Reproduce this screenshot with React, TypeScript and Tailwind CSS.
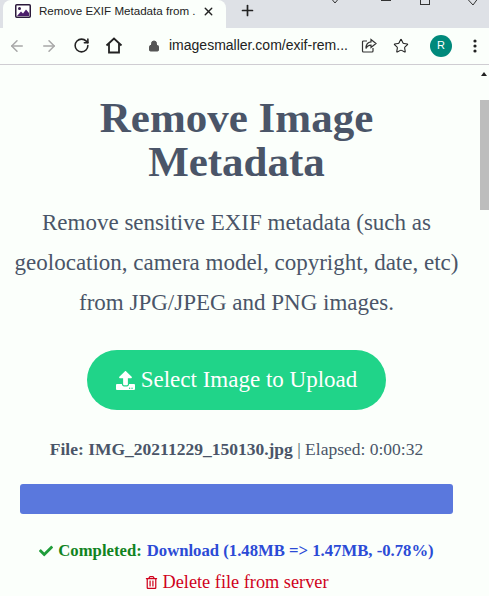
import { ArrowLeft, ArrowRight, RotateCw, Lock, Star, X, Plus } from "lucide-react";
import { FaUpload, FaCheck, FaRegTrashAlt } from "react-icons/fa";

const serif = "font-['Liberation_Serif',serif]";

const Favicon = () => (
  <svg width="16" height="14" viewBox="0 0 16 14">
    <rect x="0.75" y="0.75" width="14.5" height="12.5" rx="1" fill="#fff" stroke="#2a1a3a" strokeWidth="1.5" />
    <circle cx="4.5" cy="4.5" r="1.5" fill="#3a2050" />
    <path d="M2 12 L6 7.5 L8 9.5 L11 5.5 L14 9 V12 Z" fill="#4a1d6a" />
  </svg>
);

const ShareIcon = () => (
  <svg width="16" height="16" viewBox="0 0 16 16" fill="none" stroke="#333" strokeWidth="1.2">
    <path d="M6 3 H2.5 A1 1 0 0 0 1.5 4 V13 A1 1 0 0 0 2.5 14 H11 A1 1 0 0 0 12 13 V10" />
    <path d="M10 1.5 L15 5.5 L10 9.5 V7.2 C7.5 7.2 6 8.2 5 10.5 C5 6.5 7 4.2 10 3.9 Z" />
  </svg>
);

const HomeIcon = () => (
  <svg width="18" height="17" viewBox="0 0 18 17" fill="none" stroke="#222" strokeWidth="1.8">
    <path d="M1.5 8.5 L9 1.5 L16.5 8.5" />
    <path d="M4 6.5 V15.5 H14 V6.5" />
  </svg>
);

const WindowControls = () => (
  <div className="ml-auto flex items-start">
    <svg width="6" height="4" viewBox="0 0 6 4" fill="none" stroke="#333" className="mr-[43px]">
      <path d="M0.5 0 L3 3 L5.5 0" />
    </svg>
    <div className="mr-[29px] h-px w-[10px] bg-[#333]" />
    <div className="mr-[37px] h-[5px] w-[10px] border border-t-0 border-[#333]" />
    <svg width="11" height="6" viewBox="0 0 11 6" fill="none" stroke="#333" className="mr-[11px]">
      <path d="M0.5 -1 L6 5 L10.5 -1" />
    </svg>
  </div>
);

export default function App() {
  return (
    <div className="relative h-[596px] w-[489px] overflow-hidden bg-[#fbfffb]">
      {/* tab strip */}
      <div className="flex h-[28px] bg-[#dee1e6]">
        <div className="ml-[3px] flex h-[28px] w-[223px] items-center rounded-t-lg bg-[#fbfffb] pb-[6px] pl-[12px] font-['Liberation_Sans',sans-serif] text-[11.6px] text-[#222]">
          <Favicon />
          <span className="ml-[8px] w-[156px] whitespace-nowrap">Remove EXIF Metadata from .</span>
          <X size={13} strokeWidth={2.5} className="ml-[7px] text-[#222]" />
        </div>
        <Plus size={17} strokeWidth={2.4} className="ml-[13px] mt-[2px] text-[#222]" />
        <WindowControls />
      </div>
      {/* toolbar */}
      <div className="flex h-[37px] items-center border-b border-[#cfcdd2] bg-[#fbfffb] pb-[1px]">
        <ArrowLeft size={18} strokeWidth={2} className="ml-[8px] text-[#a8a8a8]" />
        <ArrowRight size={18} strokeWidth={2} className="ml-[14px] text-[#a8a8a8]" />
        <RotateCw size={17} strokeWidth={2.2} className="ml-[15px] text-[#222]" />
        <span className="ml-[15px]"><HomeIcon /></span>
        <Lock size={12} fill="#555" strokeWidth={2} className="ml-[25px] text-[#555]" />
        <span className="ml-[9px] font-['Liberation_Sans',sans-serif] text-[14px] whitespace-nowrap text-[#222]">imagesmaller.com/exif-rem...</span>
        <span className="ml-[13px]"><ShareIcon /></span>
        <Star size={16} strokeWidth={1.6} className="ml-[16px] text-[#222]" />
        <div className="ml-[21px] flex h-[22px] w-[22px] items-center justify-center rounded-full bg-[#00897b] font-['Liberation_Sans',sans-serif] text-[11px] text-white">R</div>
        <svg width="4" height="14" viewBox="0 0 4 14" fill="#222" className="ml-[21px]">
          <circle cx="2" cy="2" r="1.6" />
          <circle cx="2" cy="7" r="1.6" />
          <circle cx="2" cy="12" r="1.6" />
        </svg>
      </div>

      {/* page */}
      <main className={`w-[473px] pt-[31px] text-center text-[#4a5568] ${serif}`}>
        <h1 className="text-[43px] leading-[44px] font-bold">
          Remove Image
          <br />
          Metadata
        </h1>
        <p className="mt-[19px] text-[23px] leading-[40px]">
          Remove sensitive EXIF metadata (such as
          <br />
          geolocation, camera model, copyright, date, etc)
          <br />
          from JPG/JPEG and PNG images.
        </p>
        <div className="mt-[27px] flex justify-center">
          <div className="flex h-[60px] w-[299px] items-center justify-center gap-[6px] rounded-full bg-[#20d489] text-[23px] text-white">
            <FaUpload size={19} />
            <span>Select Image to Upload</span>
          </div>
        </div>
        <p className="mt-[27px] text-[17.5px] leading-[24px]">
          <b>File: IMG_20211229_150130.jpg</b> | Elapsed: 0:00:32
        </p>
        <div className="mx-[20px] mt-[23px] h-[30px] rounded-[3px] bg-[#5a78dd]" />
        <p className="mt-[25px] flex items-center justify-center text-[16.7px] leading-[24px] font-bold whitespace-nowrap">
          <FaCheck size={14} className="mr-[5px] text-[#1f9d3a]" />
          <span className="text-[#11841f]">Completed:</span>
          <span className="ml-[5px] text-[#2b4bd6]">Download (1.48MB =&gt; 1.47MB, -0.78%)</span>
        </p>
        <p className="mt-[7px] flex items-center justify-center text-[18.3px] leading-[24px] text-[#d0021b]">
          <FaRegTrashAlt size={13} className="mr-[5px]" />
          <span>Delete file from server</span>
        </p>
      </main>

      {/* scrollbar overlays the right edge */}
      <div className="absolute top-[65px] right-0 h-[531px] w-[9px] bg-[#fbfffb]">
        <div className="mt-[35px] h-[110px] w-[9px] bg-[#bdbdbd]" />
      </div>
      <div className="absolute top-[72px] right-[2px] h-0 w-0 border-x-[3px] border-b-[4px] border-x-transparent border-b-[#222]" />
    </div>
  );
}
